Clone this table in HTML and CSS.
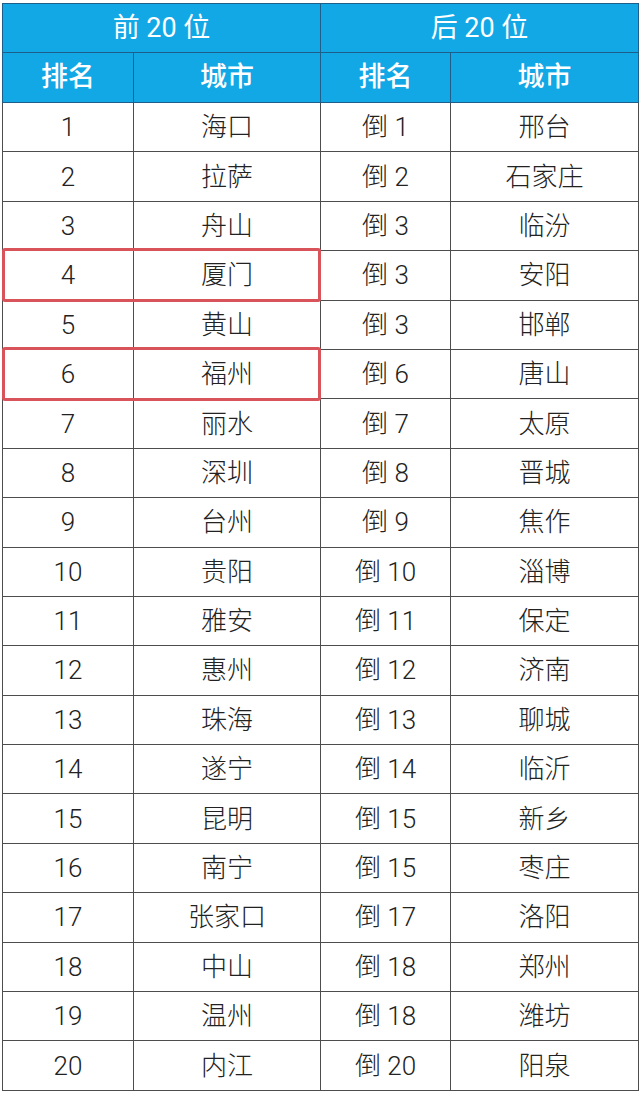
FILE: index.html
```html
<!DOCTYPE html>
<html lang="zh">
<head>
<meta charset="utf-8">
<title>城市排名</title>
<link rel="stylesheet" href="styles.css">
</head>
<body>
<div class="wrap">
  <table class="rank">
    <colgroup>
      <col class="c-num"><col class="c-city"><col class="c-num2"><col class="c-city2">
    </colgroup>
    <thead>
      <tr class="group"><th colspan="2">前 20 位</th><th colspan="2">后 20 位</th></tr>
      <tr class="sub"><th>排名</th><th>城市</th><th>排名</th><th>城市</th></tr>
    </thead>
    <tbody>
      <tr><td>1</td><td>海口</td><td>倒 1</td><td>邢台</td></tr>
      <tr><td>2</td><td>拉萨</td><td>倒 2</td><td>石家庄</td></tr>
      <tr><td>3</td><td>舟山</td><td>倒 3</td><td>临汾</td></tr>
      <tr><td>4</td><td>厦门</td><td>倒 3</td><td>安阳</td></tr>
      <tr><td>5</td><td>黄山</td><td>倒 3</td><td>邯郸</td></tr>
      <tr><td>6</td><td>福州</td><td>倒 6</td><td>唐山</td></tr>
      <tr><td>7</td><td>丽水</td><td>倒 7</td><td>太原</td></tr>
      <tr><td>8</td><td>深圳</td><td>倒 8</td><td>晋城</td></tr>
      <tr><td>9</td><td>台州</td><td>倒 9</td><td>焦作</td></tr>
      <tr><td>10</td><td>贵阳</td><td>倒 10</td><td>淄博</td></tr>
      <tr><td>11</td><td>雅安</td><td>倒 11</td><td>保定</td></tr>
      <tr><td>12</td><td>惠州</td><td>倒 12</td><td>济南</td></tr>
      <tr><td>13</td><td>珠海</td><td>倒 13</td><td>聊城</td></tr>
      <tr><td>14</td><td>遂宁</td><td>倒 14</td><td>临沂</td></tr>
      <tr><td>15</td><td>昆明</td><td>倒 15</td><td>新乡</td></tr>
      <tr><td>16</td><td>南宁</td><td>倒 15</td><td>枣庄</td></tr>
      <tr><td>17</td><td>张家口</td><td>倒 17</td><td>洛阳</td></tr>
      <tr><td>18</td><td>中山</td><td>倒 18</td><td>郑州</td></tr>
      <tr><td>19</td><td>温州</td><td>倒 18</td><td>潍坊</td></tr>
      <tr><td>20</td><td>内江</td><td>倒 20</td><td>阳泉</td></tr>
    </tbody>
  </table>
  <div class="hl hl-a"></div>
  <div class="hl hl-b"></div>
</div>
</body>
</html>
```

FILE: styles.css
```css
html, body {
  margin: 0;
  padding: 0;
  background: #ffffff;
}

.wrap {
  position: relative;
  width: 636px;
  margin: 3px 0 0 2px;
}

.rank {
  width: 636px;
  border-collapse: collapse;
  table-layout: fixed;
  font-family: Roboto, "Noto Sans CJK SC", sans-serif;
  font-weight: 300;
  font-size: 26px;
  color: #222222;
}

.c-num { width: 131px; }
.c-city { width: 187px; }
.c-num2 { width: 130px; }
.c-city2 { width: 188px; }

.rank th,
.rank td {
  padding: 0;
  text-align: center;
  vertical-align: middle;
  line-height: 1;
}

.rank td {
  border: 1px solid #4d4d4d;
  height: 48.4px;
}

.rank th {
  background: #12a8e6;
  color: #ffffff;
  border: 1px solid #1d5f8a;
  font-size: 27px;
}

.rank .group th {
  height: 48px;
  font-weight: 400;
}

.rank .sub th {
  height: 49px;
  font-weight: 500;
}

.hl {
  position: absolute;
  left: 0;
  width: 313px;
  height: 48px;
  border: 3px solid #d9535b;
  border-radius: 3px;
}

.hl-a { top: 245px; }
.hl-b { top: 344px; }
```
